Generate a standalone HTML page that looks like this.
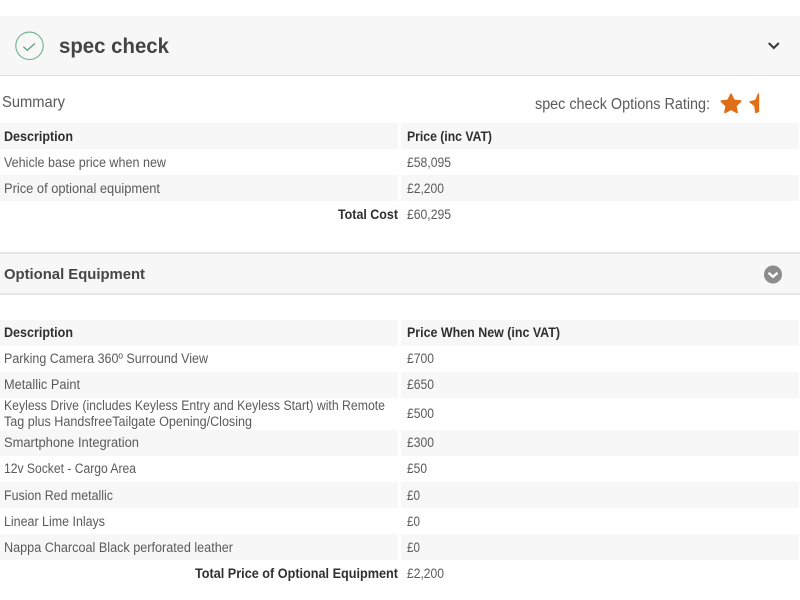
<!DOCTYPE html>
<html lang="en">
<head>
<meta charset="utf-8">
<title>spec check</title>
<style>
html,body{margin:0;padding:0;background:#fff;width:800px;height:600px;overflow:hidden}
svg{display:block;filter:blur(.3px)}
text{font-family:"Liberation Sans",Arial,sans-serif;font-size:13.400px;fill:#5a5a5a}
.b{font-weight:700;fill:#2f2f2f}
</style>
</head>
<body>
<svg width="800" height="600" viewBox="0 0 800 600" xmlns="http://www.w3.org/2000/svg">
<rect x="0" y="16" width="800" height="59" fill="#f7f7f7"/>
<rect x="0" y="75" width="800" height="1" fill="#dedede"/>
<circle cx="29.500" cy="45.800" r="13.700" fill="none" stroke="#6fb08f" stroke-width="1.100"/>
<path d="M23.500 46.800l3.800 3.500 7.700-7" fill="none" stroke="#4f9d77" stroke-width="1.300"/>
<text x="59" y="53" textLength="110" lengthAdjust="spacingAndGlyphs" style="font-size:21px;font-weight:700;fill:#444">spec check</text>
<path d="M768.800 43l5 5 5-5" fill="none" stroke="#3d3d3d" stroke-width="2.200"/>

<text x="2" y="107" textLength="63" lengthAdjust="spacingAndGlyphs" style="font-size:15.500px">Summary</text>
<text x="535" y="109" textLength="175" lengthAdjust="spacingAndGlyphs" style="font-size:15.500px">spec check Options Rating:</text>
<path d="M731 94.500l2.900 6 6.600.8-4.900 4.500 1.300 6.500-5.900-3.300-5.900 3.300 1.300-6.500-4.900-4.500 6.600-.8z" fill="#e06e16" stroke="#e06e16" stroke-width="2" stroke-linejoin="round"/>
<path d="M758.500 94v17.500l-2.700 1-1-6.800-4.800-3.900 5.700-1.300z" fill="#e06e16" stroke="#e06e16" stroke-width="1.400" stroke-linejoin="round"/>

<rect x="0" y="123" width="398" height="26" fill="#f7f7f7"/><rect x="401" y="123" width="398" height="26" fill="#f7f7f7"/>
<rect x="0" y="175" width="398" height="26" fill="#f7f7f7"/><rect x="401" y="175" width="398" height="26" fill="#f7f7f7"/>
<text class="b" x="4" y="141" textLength="69" lengthAdjust="spacingAndGlyphs">Description</text>
<text class="b" x="407" y="141" textLength="85" lengthAdjust="spacingAndGlyphs">Price (inc VAT)</text>
<text x="4" y="167" textLength="162" lengthAdjust="spacingAndGlyphs">Vehicle base price when new</text>
<text x="407" y="167" textLength="44" lengthAdjust="spacingAndGlyphs">£58,095</text>
<text x="4" y="193" textLength="156" lengthAdjust="spacingAndGlyphs">Price of optional equipment</text>
<text x="407" y="193" textLength="37" lengthAdjust="spacingAndGlyphs">£2,200</text>
<text class="b" x="338" y="219" textLength="60" lengthAdjust="spacingAndGlyphs">Total Cost</text>
<text x="407" y="219" textLength="44" lengthAdjust="spacingAndGlyphs">£60,295</text>

<rect x="0" y="253" width="800" height="41" fill="#f7f7f7"/>
<rect x="0" y="252" width="800" height="2" fill="#e6e6e6"/>
<rect x="0" y="293" width="800" height="2" fill="#e6e6e6"/>
<text x="4" y="279" textLength="141" lengthAdjust="spacingAndGlyphs" style="font-size:15px;font-weight:700;fill:#454545">Optional Equipment</text>
<circle cx="773" cy="274.500" r="9" fill="#8c8c8c"/>
<path d="M768.500 272.800l4.500 4 4.500-4" fill="none" stroke="#fff" stroke-width="2.400"/>

<rect x="0" y="320" width="398" height="26" fill="#f7f7f7"/><rect x="401" y="320" width="398" height="26" fill="#f7f7f7"/>
<rect x="0" y="372" width="398" height="26" fill="#f7f7f7"/><rect x="401" y="372" width="398" height="26" fill="#f7f7f7"/>
<rect x="0" y="430" width="398" height="26" fill="#f7f7f7"/><rect x="401" y="430" width="398" height="26" fill="#f7f7f7"/>
<rect x="0" y="482" width="398" height="26" fill="#f7f7f7"/><rect x="401" y="482" width="398" height="26" fill="#f7f7f7"/>
<rect x="0" y="534" width="398" height="26" fill="#f7f7f7"/><rect x="401" y="534" width="398" height="26" fill="#f7f7f7"/>

<text class="b" x="4" y="337" textLength="69" lengthAdjust="spacingAndGlyphs">Description</text>
<text class="b" x="407" y="337" textLength="153" lengthAdjust="spacingAndGlyphs">Price When New (inc VAT)</text>
<text x="4" y="363" textLength="204" lengthAdjust="spacingAndGlyphs">Parking Camera 360º Surround View</text>
<text x="407" y="363" textLength="27" lengthAdjust="spacingAndGlyphs">£700</text>
<text x="4" y="389" textLength="76" lengthAdjust="spacingAndGlyphs">Metallic Paint</text>
<text x="407" y="389" textLength="27" lengthAdjust="spacingAndGlyphs">£650</text>
<text x="4" y="410" textLength="381" lengthAdjust="spacingAndGlyphs">Keyless Drive (includes Keyless Entry and Keyless Start) with Remote</text>
<text x="4" y="426" textLength="248" lengthAdjust="spacingAndGlyphs">Tag plus HandsfreeTailgate Opening/Closing</text>
<text x="407" y="418" textLength="27" lengthAdjust="spacingAndGlyphs">£500</text>
<text x="4" y="447" textLength="135" lengthAdjust="spacingAndGlyphs">Smartphone Integration</text>
<text x="407" y="447" textLength="27" lengthAdjust="spacingAndGlyphs">£300</text>
<text x="4" y="473" textLength="132" lengthAdjust="spacingAndGlyphs">12v Socket - Cargo Area</text>
<text x="407" y="473" textLength="20" lengthAdjust="spacingAndGlyphs">£50</text>
<text x="4" y="500" textLength="109" lengthAdjust="spacingAndGlyphs">Fusion Red metallic</text>
<text x="407" y="500" textLength="13" lengthAdjust="spacingAndGlyphs">£0</text>
<text x="4" y="526" textLength="101" lengthAdjust="spacingAndGlyphs">Linear Lime Inlays</text>
<text x="407" y="526" textLength="13" lengthAdjust="spacingAndGlyphs">£0</text>
<text x="4" y="552" textLength="229" lengthAdjust="spacingAndGlyphs">Nappa Charcoal Black perforated leather</text>
<text x="407" y="552" textLength="13" lengthAdjust="spacingAndGlyphs">£0</text>
<text class="b" x="195" y="578" textLength="203" lengthAdjust="spacingAndGlyphs">Total Price of Optional Equipment</text>
<text x="407" y="578" textLength="37" lengthAdjust="spacingAndGlyphs">£2,200</text>
</svg>
</body>
</html>
